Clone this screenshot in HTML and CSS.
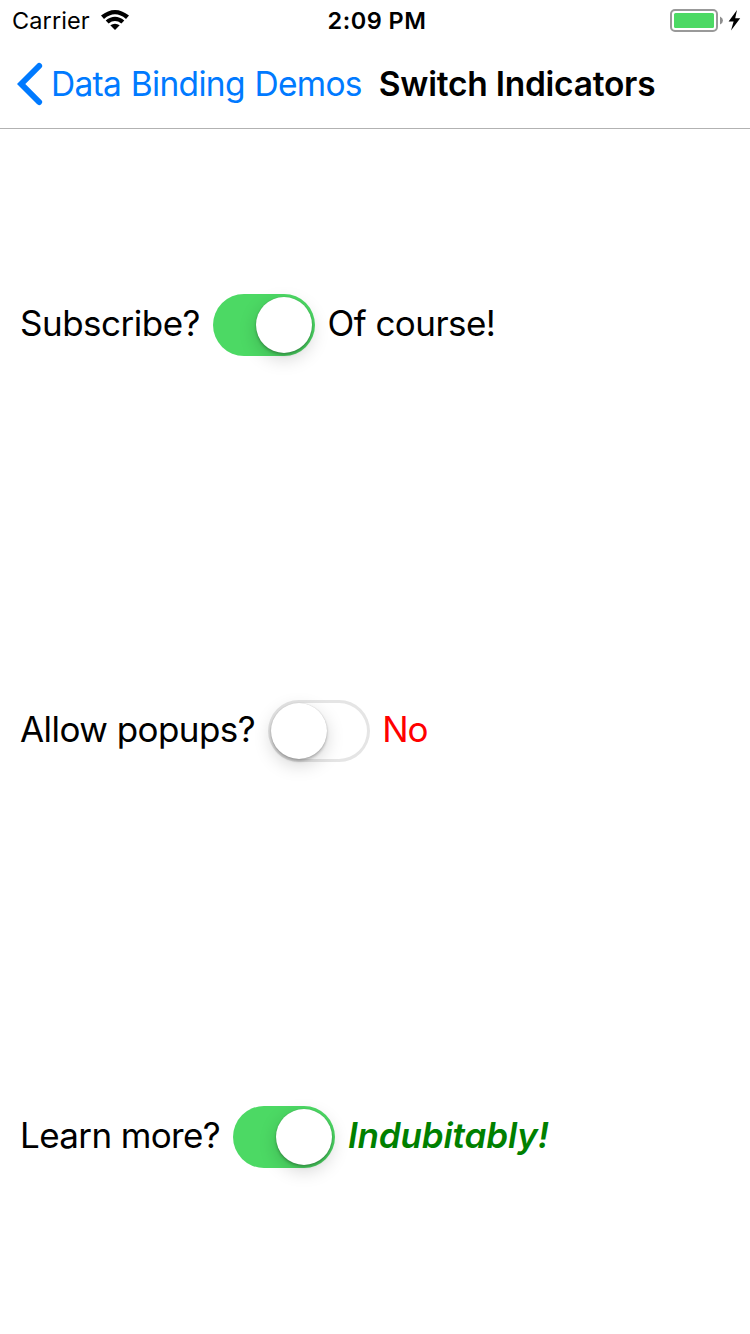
FILE: index.html
```html
<!DOCTYPE html>
<html lang="en">
<head>
<meta charset="utf-8">
<title>Switch Indicators</title>
<link rel="stylesheet" href="styles.css">
</head>
<body>
<div class="screen">
  <header class="header">
    <div class="status">
      <div class="status-left">
        <span class="carrier">Carrier</span>
        <svg class="wifi" width="28" height="20" viewBox="0 0 28 20"><path d="M0 5.6Q14-5.6 28 5.6L25 8.9Q14-.2 3 8.9Z"/><path d="M4.7 10.5Q14 3 23.3 10.5L20.4 13.5Q14 8.6 7.6 13.5Z"/><path d="M9.3 15.3Q14 12 18.7 15.3L14 20Z"/></svg>
      </div>
      <span class="time">2:09 PM</span>
      <div class="status-right">
        <svg class="battery" width="72" height="26" viewBox="0 0 72 26"><rect x="1" y="2" width="46" height="21" rx="4" fill="none" stroke="#999" stroke-width="2"/><rect x="4" y="5" width="40" height="15" rx="1.5" fill="#4cd964"/><path d="M50 8.5Q53 10 53 12.5Q53 15 50 16.5Z" fill="#8e8e8e"/><path d="M67 2L58.6 13.6H63.6L61 22.4L70.2 10.2H65.2Z"/></svg>
      </div>
    </div>
    <nav class="nav">
      <a class="back"><svg class="chevron" width="26" height="44" viewBox="0 0 26 44"><path d="M22.1 4L4.2 22L22.1 40" fill="none" stroke="#007aff" stroke-width="6" stroke-linecap="round"/></svg><span class="back-label">Data Binding Demos</span></a>
      <h1 class="title">Switch Indicators</h1>
    </nav>
  </header>
  <main class="rows">
    <div class="row">
      <span class="label label-subscribe">Subscribe?</span>
      <span class="switch switch-on"><span class="thumb"></span></span>
      <span class="label answer-course">Of course!</span>
    </div>
    <div class="row">
      <span class="label label-popups">Allow popups?</span>
      <span class="switch"><span class="thumb"></span></span>
      <span class="label answer-no">No</span>
    </div>
    <div class="row">
      <span class="label label-learn">Learn more?</span>
      <span class="switch switch-on"><span class="thumb"></span></span>
      <span class="label answer-strong">Indubitably!</span>
    </div>
  </main>
</div>
</body>
</html>
```
FILE: styles.css
```css
* { box-sizing: border-box; }
body { margin: 0; background: #fff; color: #000; font-family: Inter, "Liberation Sans", sans-serif; }
.screen { display: flex; flex-direction: column; width: 750px; height: 1334px; overflow: hidden; }
.header { height: 129px; border-bottom: 1px solid #b2b2b2; flex: none; }
.status { display: grid; grid-template-columns: 1fr auto 1fr; height: 41px; padding: 1px 8px 0 12px; line-height: 40px; }
.status-left, .status-right { display: flex; align-items: center; }
.status-left { gap: 11px; }
.status-right { justify-content: flex-end; }
.wifi { margin-bottom: 2px; }
.carrier { font-size: 23.5px; letter-spacing: 0.1px; }
.time { font-size: 23.5px; font-weight: 600; letter-spacing: 0.5px; }
.nav { display: flex; height: 86px; padding-left: 17px; align-items: center; line-height: 44px; }
.back { display: flex; align-items: center; gap: 8px; color: #007aff; font-size: 33.5px; letter-spacing: -0.7px; word-spacing: 1px; }
.back-label { white-space: nowrap; }
.title { margin: 0 0 0 17px; font-size: 33.5px; font-weight: 600; letter-spacing: -0.25px; white-space: nowrap; }
.rows { flex: 1; display: grid; grid-template-rows: repeat(3, 1fr); gap: 12px; margin-top: -1px; padding-left: 20px; }
.row { display: flex; align-items: center; }
.label { flex: none; padding-bottom: 5px; font-size: 35px; line-height: 44px; white-space: nowrap; }
.label-subscribe { letter-spacing: -0.5px; }
.label-popups { letter-spacing: -0.55px; }
.label-learn { letter-spacing: -0.63px; }
.switch { flex: none; display: flex; width: 102px; height: 62px; margin: 0 13px; padding: 3px; border-radius: 31px; box-shadow: inset 0 0 0 3px #e5e5e5; }
.thumb { width: 56px; height: 56px; border-radius: 50%; background: #fff; box-shadow: 0 6px 18px rgba(0,0,0,.17), 0 2px 3px rgba(0,0,0,.24), 0 0 1px rgba(0,0,0,.2); }
.switch-on { justify-content: flex-end; background: #4cd964; box-shadow: none; }
.answer-course { margin-left: -0.5px; letter-spacing: -0.55px; }
.answer-no { margin-left: -1px; color: #f00; letter-spacing: -1px; }
.answer-strong { color: #008000; font-weight: 600; font-style: italic; letter-spacing: -0.15px; }
```
